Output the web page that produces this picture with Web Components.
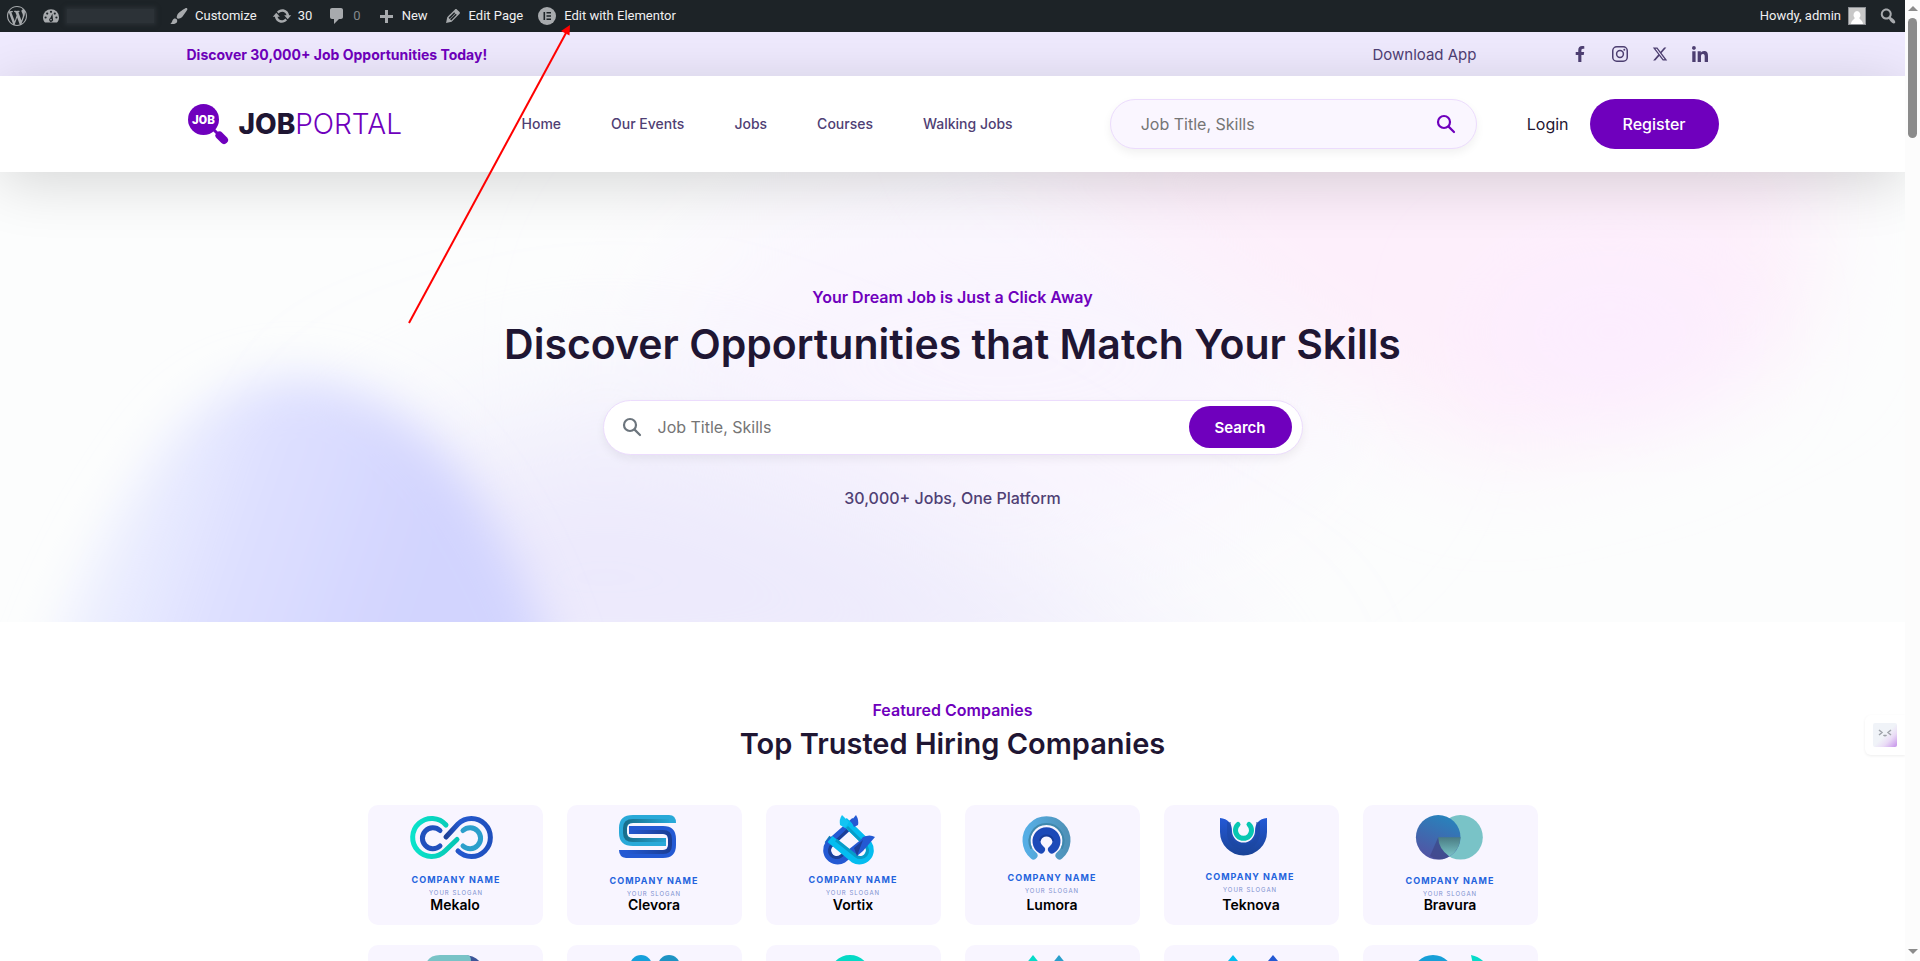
<!DOCTYPE html>
<html lang="en">
<head>
<meta charset="utf-8">
<meta name="viewport" content="width=device-width, initial-scale=1">
<title>Job Portal</title>
<style>
    :root {
        --purple: #6f00bd;
        --ink: #1f1633;
        --muted: #4f4074;
        --tint: #f8f5ff;
        --line: #ecdcfd;
    }
    html, body {
        height: 100%;
    }
    body {
        margin: 0;
        display: flex;
        position: relative;
        overflow: hidden;
        background: #fff;
        color: var(--ink);
        font-family: Inter, "Liberation Sans", sans-serif;
    }
    main {
        flex: 1;
        min-width: 0;
        overflow: hidden;
    }
</style>
</head>
<body>
    <main>
        <admin-bar>
            <admin-item icon="wordpress" label="About WordPress"></admin-item>
            <admin-item icon="gauge" label="Site"><site-name></site-name></admin-item>
            <admin-item icon="brush">Customize</admin-item>
            <admin-item icon="update">30</admin-item>
            <admin-item icon="comment" dim>0</admin-item>
            <admin-item icon="plus">New</admin-item>
            <admin-item icon="pencil">Edit Page</admin-item>
            <admin-item icon="elementor">Edit with Elementor</admin-item>
            <admin-item slot="end" icon="avatar" reverse>Howdy, admin</admin-item>
            <admin-item slot="end" icon="search" label="Search"></admin-item>
        </admin-bar>
        <top-strip>
            Discover 30,000+ Job Opportunities Today!
            <a slot="app" href="#">Download App</a>
        </top-strip>
        <site-header>
            <nav-link>Home</nav-link>
            <nav-link>Our Events</nav-link>
            <nav-link>Jobs</nav-link>
            <nav-link>Courses</nav-link>
            <nav-link>Walking Jobs</nav-link>
        </site-header>
        <hero-banner>
            <span slot="tagline">Your Dream Job is Just a Click Away</span>
            <span slot="title">Discover Opportunities that Match Your Skills</span>
            <span slot="note">30,000+ Jobs, One Platform</span>
        </hero-banner>
        <featured-companies>
            <span slot="tagline">Featured Companies</span>
            <span slot="title">Top Trusted Hiring Companies</span>
            <company-card art="loops">Mekalo</company-card>
            <company-card art="ribbon">Clevora</company-card>
            <company-card art="knot">Vortix</company-card>
            <company-card art="arch">Lumora</company-card>
            <company-card art="cup">Teknova</company-card>
            <company-card art="discs">Bravura</company-card>
            <company-card art="fold"></company-card>
            <company-card art="pair"></company-card>
            <company-card art="ring"></company-card>
            <company-card art="peaks"></company-card>
            <company-card art="spires"></company-card>
            <company-card art="leaf"></company-card>
        </featured-companies>
    </main>
    <scroll-track></scroll-track>
    <chat-tab></chat-tab>
    <pointer-arrow></pointer-arrow>

<script>
    // attach an open shadow root filled from a template
    function render(host, html) {
        const template = document.createElement('template');
        template.innerHTML = html;
        host.attachShadow({ mode: 'open' }).appendChild(template.content.cloneNode(true));
    }

    const lens = /* html */ `
        <svg viewBox="0 0 20 20" width="20" height="20" fill="none" stroke="currentColor" stroke-width="2.2" stroke-linecap="round">
            <circle cx="8" cy="8" r="6"/><path d="M12.6 12.6L18 18"/>
        </svg>`;

    const icons = {
        wordpress: '<path d="M20 10c0-5.51-4.49-10-10-10C4.48 0 0 4.49 0 10c0 5.52 4.48 10 10 10 5.51 0 10-4.48 10-10zM7.78 15.37L4.37 6.22c.55-.02 1.17-.08 1.17-.08.5-.06.44-1.13-.06-1.11 0 0-1.45.11-2.37.11-.18 0-.37 0-.58-.01C4.12 2.69 6.87 1.11 10 1.11c2.33 0 4.45.87 6.05 2.34-.68-.11-1.65.39-1.65 1.58 0 .74.45 1.36.9 2.1.35.61.55 1.36.55 2.46 0 1.49-1.4 5-1.4 5l-3.03-8.37c.54-.02.82-.17.82-.17.5-.05.44-1.25-.06-1.22 0 0-1.44.12-2.38.12-.87 0-2.33-.12-2.33-.12-.5-.03-.56 1.2-.06 1.22l.92.08 1.26 3.41zM17.41 10c.24-.64.74-1.87.43-4.25.7 1.29 1.05 2.71 1.05 4.25 0 3.29-1.73 6.24-4.4 7.78.97-2.59 1.94-5.2 2.92-7.78zM6.1 18.09C3.12 16.65 1.11 13.53 1.11 10c0-1.3.23-2.48.72-3.59C3.25 10.3 4.67 14.2 6.1 18.09zm4.03-6.63l2.58 6.98c-.86.29-1.76.45-2.71.45-.79 0-1.57-.11-2.29-.33.81-2.38 1.62-4.74 2.42-7.1z"/>',
        gauge: '<path d="M4 16.500C2.700 15.200 2 13.300 2 11.200a8 8 0 0 1 16 0c0 2.100-.7 4-2 5.300z"/><g fill="#1d2327"><circle cx="4.600" cy="11.500" r="1.100"/><circle cx="6.200" cy="7.600" r="1.100"/><circle cx="10" cy="5.800" r="1.100"/><circle cx="13.800" cy="7.600" r="1.100"/><circle cx="15.400" cy="11.500" r="1.100"/><path d="M11.400 7.800l.5 5a2 2 0 1 1-2.600-.8z"/></g><circle cx="10" cy="13.600" r=".8"/>',
        brush: '<path d="M18.33 3.57s.27-.8-.31-1.36c-.53-.52-1.22-.24-1.22-.24-.61.3-5.76 3.47-7.67 5.57-.86.96-2.06 3.79-1.09 4.82.92.98 3.96-.17 4.79-1 2.06-2.06 5.21-7.17 5.5-7.79zM1.4 17.65c2.37-1.56 1.46-3.41 3.23-4.64.93-.65 2.22-.62 3.08.29.63.67.8 2.57-.16 3.46-1.57 1.45-4 1.55-6.15.89z"/>',
        update: '<path d="M10.2 3.28c3.53 0 6.43 2.61 6.92 6h2.08l-3.5 4-3.5-4h2.32c-.45-1.97-2.21-3.45-4.32-3.45-1.45 0-2.73.71-3.54 1.78L4.95 5.66C6.23 4.2 8.11 3.28 10.2 3.28zm-.4 13.44c-3.52 0-6.43-2.61-6.92-6H.8l3.5-4c1.17 1.33 2.33 2.67 3.5 4H5.48c.45 1.97 2.21 3.45 4.32 3.45 1.45 0 2.73-.71 3.54-1.78l1.71 1.95c-1.28 1.46-3.15 2.38-5.25 2.38z"/>',
        comment: '<path d="M5 2h9c1.1 0 2 .9 2 2v7c0 1.1-.9 2-2 2h-2l-5 5v-5H5c-1.1 0-2-.9-2-2V4c0-1.1.9-2 2-2z"/>',
        plus: '<path d="M17 7v3h-5v5H9v-5H4V7h5V2h3v5h5z" transform="translate(0 2)"/>',
        pencil: '<path d="M13.89 3.39l2.71 2.72c.46.46.42 1.24.03 1.64l-8.01 8.02-5.56 1.16 1.16-5.58s7.6-7.63 7.99-8.03c.39-.39 1.22-.39 1.68.07zm-2.73 2.79l-5.59 5.61 1.11 1.11 5.54-5.65zm-2.97 8.23l5.58-5.6-1.07-1.08-5.59 5.6z"/>',
        elementor: '<circle cx="9" cy="10" r="9"/><path d="M5.500 6h1.600v8H5.500zM8.500 6h4.500v1.600H8.500zM8.500 9.200h4.500v1.600H8.500zM8.500 12.400h4.500V14H8.500z" fill="#1d2327"/>',
        search: '<path d="M12.14 4.18c1.87 1.87 2.11 4.75.72 6.89.12.1.22.21.36.31.2.16.47.36.81.59.34.24.56.39.66.47.42.31.73.57.94.78.32.32.6.65.84 1 .25.35.44.69.59 1.04.14.35.21.68.18 1-.02.32-.14.59-.36.81s-.49.34-.81.36c-.31.02-.65-.04-.99-.19-.35-.14-.7-.34-1.04-.59-.35-.24-.68-.52-1-.84-.21-.21-.47-.52-.77-.93-.1-.13-.25-.35-.47-.66-.22-.32-.4-.57-.56-.78-.16-.2-.29-.35-.44-.5-2.07 1.09-4.69.76-6.44-.98-2.14-2.15-2.14-5.64 0-7.78 2.15-2.15 5.63-2.15 7.78 0zm-1.41 6.36c1.36-1.37 1.36-3.58 0-4.95-1.37-1.37-3.59-1.37-4.95 0-1.37 1.37-1.37 3.58 0 4.95 1.36 1.37 3.58 1.37 4.95 0z"/>',
        avatar: '<path d="M1 1h18v18H1z" fill="#8c8f94"/><path d="M2 2h16v16H2z" fill="#c8c8c8"/><path d="M10 5a3.600 4 0 0 1 2.300 7c.2 1.500 3.200 1.800 3.700 6H4c.5-4.200 3.500-4.500 3.700-6A3.600 4 0 0 1 10 5z" fill="#fff"/>'
    };

    class AdminBar extends HTMLElement {
        connectedCallback() {
            render(this, /* html */ `
            <style>
                :host {
                    display: flex;
                    justify-content: space-between;
                    height: 32px;
                    background: #1d2327;
                    color: #f0f0f1;
                    font: 13px/32px Roboto, "Liberation Sans", sans-serif;
                }
                div { display: flex; }
            </style>
            <div><slot></slot></div>
            <div><slot name="end"></slot></div>`);
        }
    }

    class AdminItem extends HTMLElement {
        connectedCallback() {
            const label = this.getAttribute('label');
            render(this, /* html */ `
            <style>
                :host { display: flex; }
                :host([dim]) { color: #84888b; }
                a {
                    display: flex;
                    align-items: center;
                    gap: 6px;
                    padding: 0 8px 0 7px;
                    color: inherit;
                    text-decoration: none;
                }
                :host(:empty) a { padding-right: 7px; gap: 0; }
                :host([reverse]) a { flex-direction: row-reverse; padding-right: 4px; }
                svg { fill: #a7aaad; }
            </style>
            <a href="#" ${label ? `aria-label="${label}"` : ''}>
                <svg viewBox="0 0 20 20" width="20" height="20">${icons[this.getAttribute('icon')]}</svg>
                <slot></slot>
            </a>`);
        }
    }

    class SiteName extends HTMLElement {
        connectedCallback() {
            render(this, /* html */ `
            <style>
                :host {
                    display: block;
                    width: 87px;
                    height: 14px;
                    background: #2c3237;
                    box-shadow: 0 0 4px 2px #2a3035;
                }
            </style>`);
        }
    }

    class TopStrip extends HTMLElement {
        connectedCallback() {
            render(this, /* html */ `
            <style>
                :host {
                    display: block;
                    background: #efeafe;
                    color: var(--muted);
                }
                .wrap {
                    display: flex;
                    align-items: center;
                    height: 44px;
                    max-width: 1532px;
                    margin: 0 auto;
                }
                strong {
                    flex: 1;
                    color: var(--purple);
                    font-size: 14px;
                    font-weight: 700;
                }
                ::slotted(a) {
                    color: inherit;
                    font-size: 15px;
                    text-decoration: none;
                }
                nav {
                    display: flex;
                    gap: 20px;
                    margin: 0 9px 0 93px;
                }
                nav a {
                    display: flex;
                    justify-content: center;
                    width: 20px;
                    color: inherit;
                }
                svg { fill: currentColor; }
            </style>
            <div class="wrap">
                <strong><slot></slot></strong>
                <slot name="app"></slot>
                <nav>
                    <a href="#" aria-label="Facebook"><svg viewBox="0 0 320 512" width="10" height="16"><path d="M279.14 288l14.22-92.66h-88.91v-60.13c0-25.35 12.42-50.06 52.24-50.06h40.42V6.26S260.43 0 225.36 0c-73.22 0-121.08 44.38-121.08 124.72v70.62H22.89V288h81.39v224h100.17V288z"/></svg></a>
                    <a href="#" aria-label="Instagram"><svg viewBox="0 0 16 16" width="16" height="16"><g fill="none" stroke="currentColor" stroke-width="1.500"><rect x=".75" y=".75" width="14.500" height="14.500" rx="4"/><circle cx="8" cy="8" r="3.400"/></g><circle cx="12.300" cy="3.700" r="1"/></svg></a>
                    <a href="#" aria-label="X"><svg viewBox="0 0 512 512" width="16" height="16"><path d="M389.2 48h70.6L305.6 224.2 487 464H345L233.7 318.6 106.5 464H35.8L200.7 275.5 26.8 48H172.4L272.9 180.9 389.2 48zM364.4 421.8h39.100L151.100 88h-42L364.400 421.800z"/></svg></a>
                    <a href="#" aria-label="LinkedIn"><svg viewBox="0 0 448 448" width="16" height="16"><path d="M100.28 448H7.4V148.9h92.88zM53.79 108.1C24.09 108.1 0 83.5 0 53.8a53.79 53.79 0 0 1 107.58 0c0 29.7-24.1 54.3-53.79 54.3zM447.9 448h-92.68V302.4c0-34.7-.7-79.2-48.29-79.2-48.29 0-55.69 37.7-55.69 76.7V448h-92.78V148.9h89.08v40.8h1.3c12.4-23.5 42.69-48.3 87.88-48.3 94 0 111.28 61.9 111.28 142.3V448z"/></svg></a>
                </nav>
            </div>`);
        }
    }

    class SiteHeader extends HTMLElement {
        connectedCallback() {
            render(this, /* html */ `
            <style>
                :host {
                    display: block;
                    position: relative;
                    z-index: 1;
                    background: #fff;
                    box-shadow: 0 10px 60px rgba(0, 0, 0, .16);
                }
                .wrap {
                    display: flex;
                    align-items: center;
                    height: 96px;
                    max-width: 1532px;
                    margin: 0 auto;
                }
                nav {
                    flex: 1;
                    display: flex;
                    gap: 50px;
                }
                search-field { flex: 0 1 367px; }
                .login {
                    margin: 0 21px 0 50px;
                    color: var(--ink);
                    text-decoration: none;
                    font-size: 16px;
                }
                button {
                    height: 50px;
                    padding: 0 33px;
                    border: 0;
                    border-radius: 25px;
                    background: var(--purple);
                    color: #fff;
                    font: 500 16px Inter, sans-serif;
                }
            </style>
            <div class="wrap">
                <brand-logo></brand-logo>
                <nav><slot></slot></nav>
                <search-field></search-field>
                <a class="login" href="#">Login</a>
                <button>Register</button>
            </div>`);
        }
    }

    class BrandLogo extends HTMLElement {
        connectedCallback() {
            render(this, /* html */ `
            <style>
                :host { flex: 0 0 335px; }
                a {
                    display: flex;
                    align-items: center;
                    gap: 10px;
                    color: var(--purple);
                    font-size: 28px;
                    font-weight: 300;
                    text-decoration: none;
                }
                b { color: var(--ink); font-weight: 800; }
                text { font: 900 12px Roboto, sans-serif; fill: #fff; }
            </style>
            <a href="#">
                <svg width="42" height="42" viewBox="0 0 42 42">
                    <circle cx="16.500" cy="16.500" r="15.500" fill="#6f00bd"/>
                    <path d="M26 26l5 5" stroke="#6f00bd" stroke-width="3"/>
                    <path d="M32.500 32.500l4.500 4.500" stroke="#6f00bd" stroke-width="8" stroke-linecap="round"/>
                    <text x="16.500" y="21" text-anchor="middle">JOB</text>
                </svg>
                <span><b>JOB</b>PORTAL</span>
            </a>`);
        }
    }

    class NavLink extends HTMLElement {
        connectedCallback() {
            render(this, /* html */ `
            <style>
                :host {
                    display: block;
                    font-size: 14px;
                    line-height: 20px;
                }
                a {
                    color: var(--muted);
                    font-weight: 500;
                    text-decoration: none;
                    white-space: nowrap;
                }
            </style>
            <a href="#"><slot></slot></a>`);
        }
    }

    class SearchField extends HTMLElement {
        connectedCallback() {
            render(this, /* html */ `
            <style>
                :host { display: block; }
                form {
                    display: flex;
                    align-items: center;
                    box-sizing: border-box;
                    height: 50px;
                    padding: 0 20px 0 30px;
                    border: 1px solid var(--line);
                    border-radius: 25px;
                    background: #faf6ff;
                    box-shadow: 0 4px 10px rgba(0, 0, 0, .06);
                }
                input {
                    flex: 1;
                    min-width: 0;
                    padding: 0;
                    border: 0;
                    background: none;
                    font: 16px Inter, sans-serif;
                }
                button {
                    display: flex;
                    padding: 0;
                    border: 0;
                    background: none;
                    color: var(--purple);
                }
            </style>
            <form>
                <input type="text" placeholder="Job Title, Skills" aria-label="Job title or skills">
                <button aria-label="Search">${lens}</button>
            </form>`);
        }
    }

    class HeroBanner extends HTMLElement {
        connectedCallback() {
            render(this, /* html */ `
            <style>
                :host {
                    display: flex;
                    flex-direction: column;
                    align-items: center;
                    justify-content: center;
                    position: relative;
                    min-height: 450px;
                    overflow: hidden;
                    background: #fcfdfd;
                    text-align: center;
                }
                .glow {
                    position: absolute;
                    inset: 0;
                    width: 100%;
                    height: 100%;
                }
                p, h1, form { position: relative; margin: 0; }
                p { font-size: 16px; line-height: 24px; }
                .tagline { color: var(--purple); font-weight: 600; }
                .note { color: var(--muted); font-weight: 500; }
                h1 {
                    margin-top: 9px;
                    font-size: 41px;
                    font-weight: 600;
                    line-height: 52px;
                }
                form {
                    display: flex;
                    align-items: center;
                    box-sizing: border-box;
                    width: 700px;
                    max-width: 90%;
                    height: 55px;
                    margin: 30px 0 31px;
                    padding: 0 10px 0 18px;
                    border: 1px solid var(--line);
                    border-radius: 28px;
                    background: #fff;
                    box-shadow: 0 4px 10px rgba(0, 0, 0, .06);
                }
                label { display: flex; color: #6c757d; }
                input {
                    flex: 1;
                    min-width: 0;
                    margin-left: 16px;
                    padding: 0;
                    border: 0;
                    background: none;
                    font: 16px Inter, sans-serif;
                }
                button {
                    height: 42px;
                    padding: 0 26px;
                    border: 0;
                    border-radius: 21px;
                    background: var(--purple);
                    color: #fff;
                    font: 600 15px Inter, sans-serif;
                }
            </style>
            <svg class="glow" viewBox="0 0 1905 450" preserveAspectRatio="none" aria-hidden="true">
                <defs>
                    <filter id="wide" x="-50%" y="-50%" width="200%" height="200%"><feGaussianBlur stdDeviation="80"/></filter>
                    <filter id="mid" x="-50%" y="-50%" width="200%" height="200%"><feGaussianBlur stdDeviation="50"/></filter>
                    <filter id="near" x="-50%" y="-50%" width="200%" height="200%"><feGaussianBlur stdDeviation="24"/></filter>
                    <linearGradient id="blob" gradientUnits="userSpaceOnUse" x1="60" y1="260" x2="420" y2="380"><stop offset="0" stop-color="#eef2ff" stop-opacity=".5"/><stop offset=".5" stop-color="#dfe1ff"/><stop offset="1" stop-color="#d2d4fe"/></linearGradient>
                </defs>
                <ellipse cx="1000" cy="190" rx="340" ry="190" fill="#f9f4fe" filter="url(#wide)"/>
                <path d="M300 560L400 290L620 230L900 330L1280 560z" fill="#ece9fc" filter="url(#wide)"/>
                <path d="M960 -60H1820L1810 170L1650 250L1480 290L1260 150z" fill="#fdeffb" filter="url(#mid)"/>
                <ellipse cx="1610" cy="160" rx="130" ry="70" fill="#fcedff" filter="url(#mid)"/>
                <path d="M150 290Q210 200 310 205Q400 220 460 300Q530 390 570 540H30Q70 400 150 290z" fill="url(#blob)" filter="url(#near)"/>
            </svg>
            <p class="tagline"><slot name="tagline"></slot></p>
            <h1><slot name="title"></slot></h1>
            <form>
                <label for="query" aria-label="Job title or skills">${lens}</label>
                <input id="query" type="text" placeholder="Job Title, Skills">
                <button>Search</button>
            </form>
            <p class="note"><slot name="note"></slot></p>`);
        }
    }

    class FeaturedCompanies extends HTMLElement {
        connectedCallback() {
            render(this, /* html */ `
            <style>
                :host {
                    display: block;
                    padding-top: 76px;
                    text-align: center;
                }
                p, h2 { margin: 0; }
                p {
                    color: var(--purple);
                    font-size: 16px;
                    font-weight: 600;
                    line-height: 24px;
                }
                h2 {
                    margin-top: 4px;
                    font-size: 29px;
                    font-weight: 600;
                    line-height: 36px;
                }
                .grid {
                    display: grid;
                    grid-template-columns: repeat(6, 1fr);
                    gap: 20px 24px;
                    max-width: 1170px;
                    margin: 43px auto 0;
                }
            </style>
            <p><slot name="tagline"></slot></p>
            <h2><slot name="title"></slot></h2>
            <div class="grid"><slot></slot></div>`);
        }
    }

    // company marks, drawn on the 175x91 upper part of a card
    const caption = (x, y) => /* html */ `
        <text class="company" x="${x}" y="${y}">COMPANY NAME</text>
        <text class="slogan" x="${x}" y="${y + 12}">YOUR SLOGAN</text>`;

    const marks = {
        loops: /* html */ `
            <defs>
                <linearGradient id="g"><stop offset="0" stop-color="#0be3cb"/><stop offset="1" stop-color="#06c6b4"/></linearGradient>
                <linearGradient id="b"><stop offset="0" stop-color="#1d3f96"/><stop offset=".3" stop-color="#2459cf"/><stop offset="1" stop-color="#1f4fbd"/></linearGradient>
            </defs>
            <g fill="none" stroke-width="5" stroke-linecap="round">
                <path d="M78 20A19 19 0 1 0 77 46L89 34.500" stroke="url(#g)"/>
                <path d="M78 32L90 19A19 19 0 1 1 90 46" stroke="url(#b)"/>
                <path d="M72 25.500A10.500 10.500 0 1 0 72 41" stroke="#2150bd"/>
                <path d="M95 25.500A10.500 10.500 0 1 1 95 41" stroke="#2b9fcb"/>
            </g>${caption(88, 78)}`,
        ribbon: /* html */ `
            <defs>
                <linearGradient id="g"><stop offset="0" stop-color="#176f8c"/><stop offset="1" stop-color="#27a6d4"/></linearGradient>
                <linearGradient id="b"><stop offset="0" stop-color="#2459d3"/><stop offset="1" stop-color="#1b3e95"/></linearGradient>
            </defs>
            <g fill="none" stroke-width="8">
                <path d="M102 14H66Q56 14 56 23V28Q56 37 66 37H99" stroke="#29a9d8"/>
                <path d="M102 16H66Q58 16 58 23V28Q58 35 66 35H99" stroke="url(#g)" stroke-width="4"/>
                <path d="M62 25H96Q105 25 105 34V40Q105 49 96 49H59" stroke="#2459d3"/>
                <path d="M62 27H96Q103 27 103 34V40Q103 47 96 47H59" stroke="url(#b)" stroke-width="4"/>
            </g>
            <path d="M102 10Q109 10 109 18H102z" fill="#29a9d8"/>
            <path d="M52 45H59V53Q52 52 52 45z" fill="#2459d3"/>${caption(87, 79)}`,
        knot: /* html */ `
            <g fill="none" stroke-width="8">
                <path d="M61 34L68 39" stroke="#1183b8"/>
                <path d="M89 16L63 39A10.500 10.500 0 0 0 77 54L102 34" stroke="#2459d3"/>
                <path d="M87 20L66 40A7 7 0 0 0 75 51L80 47" stroke="#1b3f98" stroke-width="3"/>
                <path d="M78 16L102 39A10.500 10.500 0 0 1 88 54L64 34" stroke="#04bdf0"/>
                <path d="M81 22L99 40A7 7 0 0 1 90 51L70 35" stroke="#069cc8" stroke-width="3"/>
            </g>
            <path d="M74 20Q73 14 76 10L83 17L79 23z" fill="#13c4f3"/>
            <path d="M85 16L90 10Q93 15 92 20L88 22z" fill="#2459d3"/>
            <path d="M88 43L97 32Q104 29 109 32L97 46L91 51z" fill="#2459d3"/>
            <path d="M88 43L97 35L91 51z" fill="#1d3f99"/>${caption(87, 78)}`,
        arch: /* html */ `
            <defs>
                <linearGradient id="g"><stop offset="0" stop-color="#56aee5"/><stop offset="1" stop-color="#4f92b9"/></linearGradient>
            </defs>
            <g fill="none" stroke-linecap="round">
                <path d="M68.500 50.500A20 20 0 1 1 94.500 50.500" stroke="url(#g)" stroke-width="8"/>
                <path d="M66 43A17 17 0 1 1 97 43" stroke="#3f88ad" stroke-width="2"/>
                <path d="M76 44.500A10 10 0 1 1 87 44.500" stroke="#1c49b8" stroke-width="8"/>
                <path d="M75 35A7 7 0 0 1 88 35" stroke="#173c9c" stroke-width="2"/>
            </g>${caption(87, 76)}`,
        cup: /* html */ `
            <defs>
                <linearGradient id="b" x2="0" y2="1"><stop offset="0" stop-color="#2459d6"/><stop offset="1" stop-color="#1a4396"/></linearGradient>
            </defs>
            <path d="M56 13C64 14 68 18 68 26A11.500 11.500 0 0 0 91 26C91 18 95 14 103 13V27A23.500 23.500 0 0 1 56 27z" fill="url(#b)"/>
            <path d="M65 17V28A14.500 14.500 0 0 0 94 28V17" fill="none" stroke="#1c469f" stroke-width="4" stroke-opacity=".5"/>
            <path d="M74 19.500A8 8 0 1 0 85 19.500" fill="none" stroke="#07c7b2" stroke-width="5" stroke-linecap="round"/>${caption(86, 75)}`,
        discs: /* html */ `
            <defs>
                <linearGradient id="b" x1=".7" y1="0" x2=".3" y2="1"><stop offset="0" stop-color="#2784bd"/><stop offset="1" stop-color="#5353a3"/></linearGradient>
                <linearGradient id="g" x2="0" y2="1"><stop offset="0" stop-color="#497c83"/><stop offset="1" stop-color="#7ac3c7"/></linearGradient>
            </defs>
            <circle cx="97.500" cy="32.300" r="22.300" fill="#79c3c7"/>
            <circle cx="75.200" cy="32.300" r="22.300" fill="url(#b)"/>
            <path d="M75.200 32.300L67 51Q77 58 86.500 51z" fill="#3c4180" fill-opacity=".6"/>
            <path d="M75.200 32.300H97.500Q97 45 86.400 51.500Q75.500 44 75.200 32.300z" fill="url(#g)"/>${caption(87, 79)}`,
        fold: /* html */ `
            <path d="M95 10Q115 10 116 30V50H95z" fill="#3c5599"/>
            <path d="M57 50V24Q58 10 72 10H99Q103 10 103 16V50z" fill="#79c3c7"/>`,
        pair: /* html */ `
            <circle cx="74" cy="21" r="11" fill="#16a0db"/><circle cx="102" cy="21" r="11" fill="#1e93c4"/>`,
        ring: '<circle cx="84" cy="30" r="16" fill="none" stroke="#06d9c6" stroke-width="8"/>',
        peaks: /* html */ `
            <path d="M68 10L88 35H48z" fill="#06dbc9"/><path d="M94 10L114 35H74z" fill="#2a9fcb"/>`,
        spires: /* html */ `
            <path d="M69 10L89 34H49z" fill="#04bdf0"/><path d="M109 10L129 34H89z" fill="#2459d3"/>`,
        leaf: /* html */ `
            <circle cx="70" cy="31" r="21" fill="#189fd8"/><path d="M108 10Q126 14 128 34H113z" fill="#06dbc9"/>`
    };

    class CompanyCard extends HTMLElement {
        connectedCallback() {
            render(this, /* html */ `
            <style>
                :host {
                    display: block;
                    height: 120px;
                    border-radius: 10px;
                    background: var(--tint);
                    color: #000;
                    font-size: 14px;
                    font-weight: 600;
                    line-height: 18px;
                }
                svg { display: block; margin: 0 auto; }
                text { text-anchor: middle; }
                .company { font: 700 9px Inter, sans-serif; letter-spacing: 1px; fill: #2463dd; }
                .slogan { font: 6px Inter, sans-serif; letter-spacing: 1px; fill: #7d90cf; }
            </style>
            <svg width="175" height="91" viewBox="0 0 175 91">${marks[this.getAttribute('art')]}</svg>
            <slot></slot>`);
        }
    }

    class ScrollTrack extends HTMLElement {
        connectedCallback() {
            render(this, /* html */ `
            <style>
                :host {
                    display: flex;
                    flex-direction: column;
                    align-items: center;
                    justify-content: space-between;
                    width: 15px;
                    background: #fcfcfc;
                }
                i {
                    width: 9px;
                    height: 120px;
                    border-radius: 5px;
                    background: #8b8b8b;
                }
                div {
                    display: flex;
                    flex-direction: column;
                    align-items: center;
                }
                svg { display: block; fill: #8b8b8b; }
            </style>
            <div>
                <svg width="15" height="18"><path d="M3 11h10L8 6z"/></svg>
                <i></i>
            </div>
            <svg width="15" height="16"><path d="M3 4h10L8 9z"/></svg>`);
        }
    }

    class ChatTab extends HTMLElement {
        connectedCallback() {
            render(this, /* html */ `
            <style>
                :host {
                    position: absolute;
                    right: 15px;
                    top: 715px;
                }
                button {
                    display: flex;
                    align-items: center;
                    width: 40px;
                    height: 40px;
                    padding: 0 8px;
                    border: 0;
                    border-radius: 6px 0 0 6px;
                    background: #fff;
                    box-shadow: 0 1px 3px rgba(0, 0, 0, .07);
                    clip-path: inset(-6px 0 -6px -6px);
                }
            </style>
            <button aria-label="Open assistant">
                <svg width="24" height="24" viewBox="0 0 24 24">
                    <defs><linearGradient id="f" x2="1" y2="1"><stop offset=".5" stop-color="#f0f3f8"/><stop offset=".7" stop-color="#eadcf6"/><stop offset="1" stop-color="#c590ea"/></linearGradient></defs>
                    <rect width="24" height="24" rx="2" fill="url(#f)"/>
                    <path d="M6 7l3 2.500L6 12M18 7l-3 2.500L18 12M10.500 12q1.500 1.500 3 0" fill="none" stroke="#9fa3aa" stroke-width="1.500"/>
                </svg>
            </button>`);
        }
    }

    class PointerArrow extends HTMLElement {
        connectedCallback() {
            render(this, /* html */ `
            <style>
                :host {
                    position: absolute;
                    left: 400px;
                    top: 20px;
                    z-index: 2;
                    pointer-events: none;
                }
                svg { display: block; }
            </style>
            <svg width="180" height="310" viewBox="0 0 180 310">
                <path d="M9 303L166 13" stroke="#f00" stroke-width="2"/>
                <path d="M170 5L169.500 15.500L161 11z" fill="#f00"/>
            </svg>`);
        }
    }

    customElements.define('admin-bar', AdminBar);
    customElements.define('admin-item', AdminItem);
    customElements.define('site-name', SiteName);
    customElements.define('top-strip', TopStrip);
    customElements.define('site-header', SiteHeader);
    customElements.define('brand-logo', BrandLogo);
    customElements.define('nav-link', NavLink);
    customElements.define('search-field', SearchField);
    customElements.define('hero-banner', HeroBanner);
    customElements.define('featured-companies', FeaturedCompanies);
    customElements.define('company-card', CompanyCard);
    customElements.define('scroll-track', ScrollTrack);
    customElements.define('chat-tab', ChatTab);
    customElements.define('pointer-arrow', PointerArrow);
</script>
</body>
</html>
